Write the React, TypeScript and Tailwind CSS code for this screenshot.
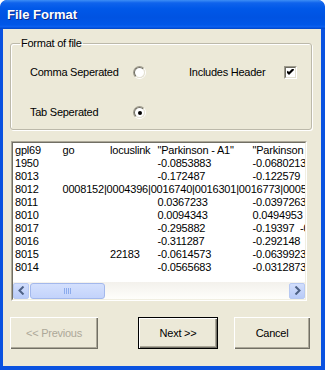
import React from 'react';

const rows = [
  'gpl69\tgo\tlocuslink\t"Parkinson - A1"\t"Parkinson - A2"',
  '1950\t\t\t-0.0853883\t-0.0680213\t-0.0512873',
  '8013\t\t\t-0.172487\t-0.122579\t-0.144573',
  '8012\t0008152|0004396|0016740|0016301|0016773|0005524|0006468',
  '8011\t\t\t0.0367233\t-0.0397263\t0.0218833',
  '8010\t\t\t0.0094343\t0.0494953\t0.0319413',
  '8017\t\t\t-0.295882\t-0.19397\t-0.241873',
  '8016\t\t\t-0.311287\t-0.292148\t-0.301543',
  '8015\t\t22183\t-0.0614573\t-0.0639923\t-0.0581243',
  '8014\t\t\t-0.0565683\t-0.0312873\t-0.0463123',
];

const Radio: React.FC<{ checked?: boolean }> = ({ checked }) => (
  <div className="w-[13px] h-[13px] rounded-full border border-t-[#9d9a8c] border-l-[#9d9a8c] border-b-white border-r-white">
    <div className="w-full h-full rounded-full border border-t-[#6f6d62] border-l-[#6f6d62] border-b-[#e3e0d2] border-r-[#e3e0d2] bg-white flex items-center justify-center">
      {checked && <div className="w-[4px] h-[4px] rounded-full bg-black" />}
    </div>
  </div>
);

const Checkbox: React.FC = () => (
  <div className="w-[13px] h-[13px] border border-t-[#9d9a8c] border-l-[#9d9a8c] border-b-white border-r-white">
    <div className="w-full h-full border border-t-[#6f6d62] border-l-[#6f6d62] border-b-[#e3e0d2] border-r-[#e3e0d2] bg-white flex items-center justify-center">
      <svg width="7" height="7" viewBox="0 0 7 7">
        <path d="M0 2.5 L2 4.5 L6.5 0" stroke="black" strokeWidth="2.2" fill="none" />
      </svg>
    </div>
  </div>
);

const ScrollButton: React.FC<{ dir: 'left' | 'right' }> = ({ dir }) => (
  <div className="w-[16px] h-[16px] rounded-[2px] border border-[#b7c9f2] bg-[linear-gradient(to_bottom,#d2defc,#b8cbf8)] flex items-center justify-center">
    <svg width="7" height="9" viewBox="0 0 7 9">
      <path
        d={dir === 'left' ? 'M5.5 0.5 L1.5 4.5 L5.5 8.5' : 'M1.5 0.5 L5.5 4.5 L1.5 8.5'}
        stroke="#4d6185"
        strokeWidth="2"
        fill="none"
      />
    </svg>
  </div>
);

const Button: React.FC<{ label: string; disabled?: boolean; isDefault?: boolean; className?: string }> = ({
  label,
  disabled,
  isDefault,
  className,
}) => (
  <div
    className={`h-[32px] flex items-center justify-center ${
      isDefault ? 'border border-black' : ''
    } ${className ?? ''}`}
  >
    <div
      className={`w-full h-full flex items-center justify-center shadow-[inset_1px_1px_0_#ffffff,inset_-1px_-1px_0_#716f64,inset_-2px_-2px_0_#aca899] ${
        disabled ? 'text-[#aca899]' : 'text-black'
      }`}
    >
      {label}
    </div>
  </div>
);

export default function App() {
  return (
    <div className="w-[325px] h-[370px] bg-[#0a52e0] rounded-t-[7px] flex flex-col overflow-hidden font-['Liberation_Sans',Arial,sans-serif] text-[11px] tracking-[-0.25px] text-black">
      <div className="h-[29px] shrink-0 rounded-t-[7px] bg-[linear-gradient(to_bottom,#3d8ef5_0%,#0f63ec_10%,#0058e8_30%,#0053e2_60%,#0057e8_85%,#0a5ff0_92%,#0045c8_100%)] flex items-center pl-[7px] pt-[1px]">
        <span className="text-white font-bold text-[13px] tracking-normal [text-shadow:1px_1px_0_#0c2a8a]">
          File Format
        </span>
      </div>

      <div className="flex-1 ml-[3px] mr-[4px] mb-[4px] bg-[#ece9d8] flex flex-col">
        <fieldset className="mt-[8px] ml-[7px] w-[302px] border border-[#bcb9aa] rounded-[3px] shadow-[inset_1px_1px_0_#ffffff,1px_1px_0_#ffffff] pb-[10px]">
          <legend className="ml-[9px] px-[1px] leading-[13px]">Format of file</legend>
          <div className="mt-[16px] h-[13px] flex items-center pl-[19px]">
            <span className="w-[103px] leading-[13px]">Comma Seperated</span>
            <Radio />
            <span className="ml-[43px] w-[95px] leading-[13px]">Includes Header</span>
            <Checkbox />
          </div>
          <div className="mt-[27px] h-[13px] flex items-center pl-[19px]">
            <span className="w-[103px] leading-[13px]">Tab Seperated</span>
            <Radio checked />
          </div>
        </fieldset>

        <div className="mt-[11px] ml-[8px] w-[296px] h-[160px] border border-t-[#aca899] border-l-[#aca899] border-b-white border-r-white">
          <div className="w-full h-full border border-t-[#716f64] border-l-[#716f64] border-b-[#f1efe2] border-r-[#f1efe2] bg-white flex flex-col">
            {/* text of the file, tab separated, clipped like the edit box */}
            <div className="flex-1 overflow-hidden pl-[2px] pt-[1px] whitespace-pre leading-[13px] tracking-[-0.2px] [tab-size:47.5px]">
              {rows.map((r, i) => (
                <div key={i}>{r}</div>
              ))}
            </div>
            <div className="h-[17px] shrink-0 flex items-center bg-[linear-gradient(to_bottom,#f3f1ec,#fefefb)]">
              <ScrollButton dir="left" />
              <div className="ml-[1px] w-[75px] h-[16px] rounded-[3px] border border-[#a3b8ec] bg-[linear-gradient(to_bottom,#d4e0fd,#c3d3fb)] flex items-center justify-center gap-[1px]">
                <div className="w-[1px] h-[6px] bg-[#8cabec]" />
                <div className="w-[1px] h-[6px] bg-[#8cabec]" />
                <div className="w-[1px] h-[6px] bg-[#8cabec]" />
                <div className="w-[1px] h-[6px] bg-[#8cabec]" />
              </div>
              <div className="flex-1" />
              <ScrollButton dir="right" />
            </div>
          </div>
        </div>

        <div className="mt-[16px] flex">
          <Button label="<< Previous" disabled className="ml-[7px] w-[88px]" />
          <Button label="Next >>" isDefault className="ml-[40px] w-[80px]" />
          <Button label="Cancel" className="ml-[16px] w-[76px]" />
        </div>
      </div>
    </div>
  );
}
